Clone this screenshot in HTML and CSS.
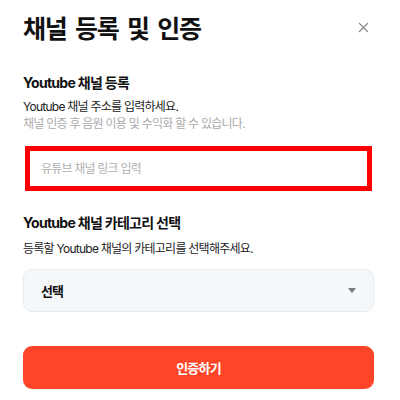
FILE: index.html
```html
<!DOCTYPE html>
<html lang="ko">
<head>
<meta charset="utf-8">
<link rel="stylesheet" href="styles.css">
</head>
<body>
<div class="modal">
  <div class="header">
    <h1 class="title">채널 등록 및 인증</h1>
    <button class="close" aria-label="닫기">
      <svg width="11" height="11" viewBox="0 0 11 11"><path d="M1 1L10 10M10 1L1 10" stroke="#8a8a8a" stroke-width="1.2" fill="none"/></svg>
    </button>
  </div>
  <h2 class="label first">Youtube 채널 등록</h2>
  <p class="desc">Youtube 채널 주소를 입력하세요.</p>
  <p class="desc muted">채널 인증 후 음원 이용 및 수익화 할 수 있습니다.</p>
  <input class="link-input" type="text" placeholder="유튜브 채널 링크 입력">
  <h2 class="label second">Youtube 채널 카테고리 선택</h2>
  <p class="desc">등록할 Youtube 채널의 카테고리를 선택해주세요.</p>
  <div class="select">
    <span class="select-text">선택</span>
    <span class="caret"></span>
  </div>
  <button class="submit">인증하기</button>
</div>
</body>
</html>
```
FILE: styles.css
```css
* { box-sizing: border-box; }
html, body { margin: 0; padding: 0; background: #fff; }
body {
  font-family: "Inter", "Noto Sans CJK KR", sans-serif;
  color: #111;
}
.modal {
  width: 400px;
  padding: 12px 26px 0 23px;
  display: flex;
  flex-direction: column;
}
.header {
  display: flex;
  justify-content: space-between;
  align-items: flex-start;
}
.title {
  margin: 0;
  font-size: 25px;
  line-height: 34px;
  font-weight: 700;
  letter-spacing: -1.3px;
  word-spacing: 4px;
  color: #111;
}
.close {
  border: 0;
  background: none;
  padding: 0;
  margin: 10px 5px 0 0;
  width: 11px;
  height: 11px;
  display: flex;
}
.label {
  margin: 0;
  font-size: 14px;
  line-height: 20px;
  font-weight: 700;
  letter-spacing: -0.7px;
  color: #111;
}
.label.first { margin-top: 27px; }
.label.second { margin-top: 22px; }
.desc {
  margin: 0;
  font-size: 12px;
  line-height: 17px;
  letter-spacing: -0.75px;
  color: #222;
}
.label.first + .desc { margin-top: 5px; }
.label.second + .desc { margin-top: 7px; }
.desc.muted { color: #ababab; }
.link-input {
  margin: 14px 2px 0 2px;
  height: 45px;
  border: 5px solid #f00;
  padding: 0 11px;
  font-family: inherit;
  font-size: 12px;
  letter-spacing: -0.8px;
  color: #222;
  outline: none;
  background: #fff;
}
.link-input::placeholder { color: #b0b0b0; }
.select {
  margin-top: 12px;
  height: 43px;
  border: 1px solid #e7ebef;
  border-radius: 9px;
  background: #f5f8fb;
  display: flex;
  align-items: center;
  justify-content: space-between;
  padding: 0 17px 0 17px;
}
.select-text {
  font-size: 13px;
  font-weight: 700;
  letter-spacing: -1px;
  color: #111;
}
.caret {
  width: 0;
  height: 0;
  border-left: 4.5px solid transparent;
  border-right: 4.5px solid transparent;
  border-top: 5px solid #777;
}
.submit {
  margin-top: 34px;
  height: 43px;
  border: 0;
  border-radius: 9px;
  background: #ff4528;
  color: #fff;
  font-family: inherit;
  font-size: 13px;
  font-weight: 700;
  letter-spacing: -0.8px;
}
```
